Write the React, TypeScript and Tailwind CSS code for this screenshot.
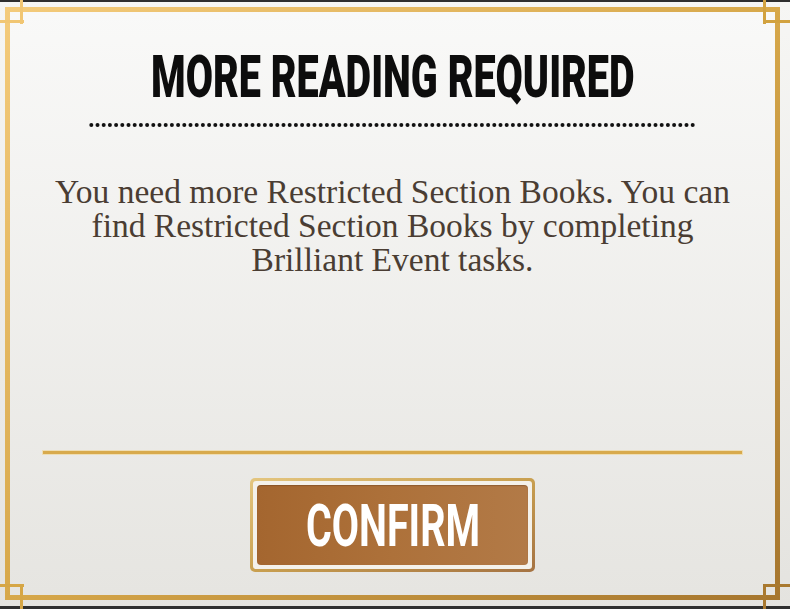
import React from "react"

const title = { fontFamily: "Roboto, 'DejaVu Sans', sans-serif" }
const body = { fontFamily: "'Liberation Serif', 'DejaVu Serif', serif" }

// thin gold strokes that cross the frame corners and form the little squares
function CornerMarks() {
  return (
    <>
      <span className="absolute left-[20px] top-0 h-[24px] w-[3px] bg-[#f1c673]" />
      <span className="absolute left-0 top-[20px] h-[3px] w-[24px] bg-[#f1c673]" />
      <span className="absolute right-[24px] top-0 h-[24px] w-[3px] bg-[#d2a23f]" />
      <span className="absolute right-0 top-[20px] h-[3px] w-[27px] bg-[#d2a23f]" />
      <span className="absolute bottom-0 left-[20px] h-[24px] w-[3px] bg-[#d6a645]" />
      <span className="absolute bottom-[22px] left-0 h-[3px] w-[24px] bg-[#d6a645]" />
      <span className="absolute bottom-0 right-[24px] h-[24px] w-[3px] bg-[#a9792f]" />
      <span className="absolute bottom-[22px] right-0 h-[3px] w-[27px] bg-[#a9792f]" />
    </>
  )
}

function DotRule() {
  const dots = Array.from({ length: 98 }, (_, i) => i)
  return (
    <svg width="608" height="6" viewBox="0 0 608 6" className="mt-[16px] block">
      {dots.map((i) => (
        <circle key={i} cx={2.3 + i * 6.2} cy={3} r={2} fill="#111" />
      ))}
    </svg>
  )
}

export default function App() {
  return (
    <div className="relative flex h-[609px] w-[790px] flex-col overflow-hidden bg-gradient-to-b from-[#f6f6f4] to-[#e4e3df]">
      <div className="h-[2px] w-full bg-[#2f2f2f]" />

      {/* gold frame */}
      <div className="ml-[5px] mr-[10px] mt-[5px] flex flex-1 flex-col bg-gradient-to-br from-[#f4cb7b] via-[#d7a84a] to-[#a6762e] p-[5px]">
        <div className="flex flex-1 flex-col items-center bg-gradient-to-b from-[#f9f9f8] to-[#e6e5e1]">
          <h1
            className="mt-[35px] scale-x-[0.67] whitespace-nowrap text-[59px] font-black uppercase leading-none text-[#0d0d0d]"
            style={title}
          >
            More Reading Required
          </h1>

          <DotRule />

          <p className="mt-[47px] text-center text-[33.5px] leading-[34px] text-[#4a3d33]" style={body}>
            You need more Restricted Section Books. You can
            <br />
            find Restricted Section Books by completing
            <br />
            Brilliant Event tasks.
          </p>

          <div className="flex-1" />

          <div className="h-[3px] w-[699px] bg-[#d8aa4c] shadow-[0_0_0_1px_rgba(240,212,140,0.55)]" />

          {/* confirm button */}
          <button className="mb-[23px] mt-[24px] h-[94px] w-[285px] rounded-[5px] bg-gradient-to-br from-[#e4c67f] via-[#c9a050] to-[#a57343] p-[3px]">
            <div className="h-full w-full rounded-[3px] bg-[#f4f1ea] p-[4px]">
              <div className="flex h-full w-full items-center justify-center rounded-[4px] bg-gradient-to-r from-[#a4662f] via-[#ad713a] to-[#b27a47] shadow-[inset_0_1px_1px_rgba(90,50,20,0.35)]">
                <span
                  className="scale-x-[0.67] whitespace-nowrap text-[59px] font-bold uppercase leading-none text-white"
                  style={title}
                >
                  Confirm
                </span>
              </div>
            </div>
          </button>
        </div>
      </div>

      <div className="mt-[6px] h-[3px] w-full bg-[#2f2f2f]" />

      <CornerMarks />
    </div>
  )
}
